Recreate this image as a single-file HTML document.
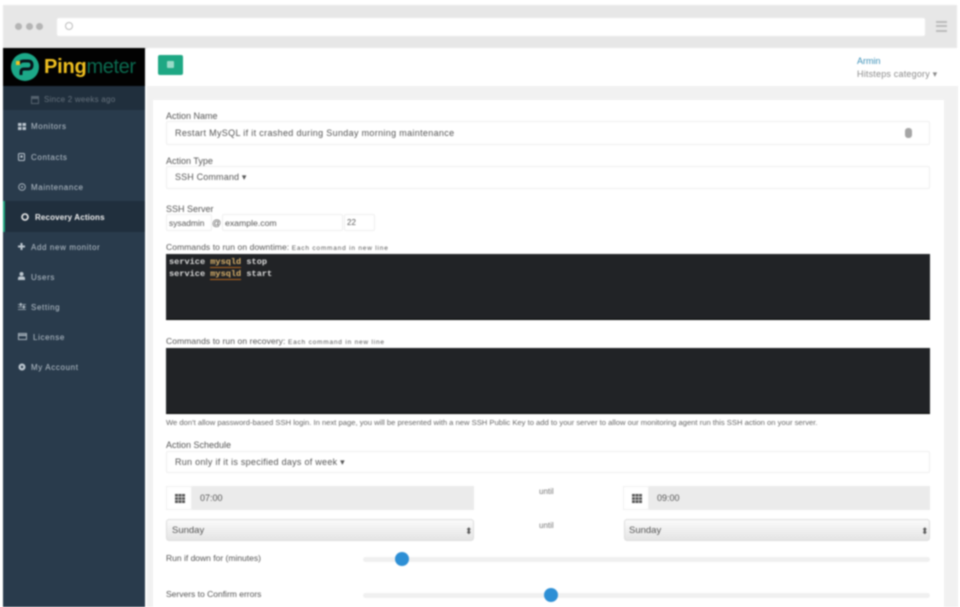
<!DOCTYPE html>
<html lang="en">
<head>
<meta charset="utf-8">
<title>Pingmeter Recovery Actions</title>
<style>
html,body{margin:0;padding:0;background:#fff}
body{width:960px;height:607px;overflow:hidden;position:relative;font-family:"Liberation Sans",sans-serif}
#p{position:absolute;left:0;top:0;width:960px;height:607px;overflow:hidden;filter:blur(.75px);background:#fff}
#p div{position:absolute;box-sizing:border-box}
#p svg{position:absolute}
.t{white-space:nowrap;font-size:9px;line-height:12px;color:#555}
.nav{white-space:nowrap;font-size:8px;line-height:12px;color:#bcc6cf;left:31px;letter-spacing:.62px}
.inp{background:#fff;border:1px solid #eee;border-radius:2px}
.code{background:#212326;border-bottom:1px solid #000;left:166px;width:764px}
.mono{font-family:"Liberation Mono",monospace;font-size:8.6px;line-height:12px;color:#ddd;white-space:nowrap;font-weight:bold}
.mono b{color:#d9b06a;border-bottom:1px solid #b5651d;font-weight:bold}
.sel{background:linear-gradient(#fafafa,#e4e4e4);border:1px solid #ddd;border-radius:3px;height:22px;top:519px}
.tb{background:#ebebeb;top:486px;height:24px}
.sq{background:#fff;border:1px solid #f0f0f0;top:486px;width:26px;height:24px}
.track{height:5px;background:#f0f0f0;border-radius:3px;left:363px;width:567px}
.knob{width:14px;height:14px;border-radius:50%;background:#2d8fd5}
</style>
</head>
<body>
<div id="p">
  <!-- browser chrome -->
  <div style="left:3px;top:5px;width:954px;height:44px;background:#e7e7e7"></div>
  <div style="left:15px;top:23px;width:7px;height:7px;border-radius:50%;background:#b5b5b5"></div>
  <div style="left:26px;top:23px;width:7px;height:7px;border-radius:50%;background:#b5b5b5"></div>
  <div style="left:36px;top:23px;width:7px;height:7px;border-radius:50%;background:#b5b5b5"></div>
  <div style="left:57px;top:18px;width:868px;height:18px;background:#fff;border-radius:2px"></div>
  <div style="left:65px;top:22px;width:8px;height:8px;border:1px solid #bbb;border-radius:50%"></div>
  <div style="left:936px;top:21px;width:11px;height:2px;background:#bbb"></div>
  <div style="left:936px;top:25px;width:11px;height:2px;background:#bbb"></div>
  <div style="left:936px;top:30px;width:11px;height:2px;background:#bbb"></div>

  <!-- sidebar -->
  <div style="left:3px;top:48px;width:142px;height:559px;background:#293b4c"></div>
  <div style="left:3px;top:48px;width:142px;height:38px;background:#020202"></div>
  <div style="left:3px;top:86px;width:142px;height:24px;background:#202f3d"></div>
  <div style="left:3px;top:201px;width:142px;height:31px;background:#202f3d"></div>
  <div style="left:3px;top:201px;width:2px;height:31px;background:#1fa67f"></div>
  <svg style="left:11px;top:53px" width="28" height="28" viewBox="0 0 28 28">
    <circle cx="14" cy="14" r="14" fill="#1ca888"/>
    <path d="M8 11 Q9 8 13 8 H17 Q21 8 21 12 Q21 16 17 16 H13 Q10 16 10 19 V22" fill="none" stroke="#07131a" stroke-width="3"/>
    <rect x="5" y="8" width="4" height="4" fill="#f2c21f"/>
  </svg>
  <div style="left:44px;top:54px;font-size:20px;line-height:26px;font-weight:bold;white-space:nowrap;color:#f0c020;letter-spacing:-.2px">Ping<span style="color:#0b6b50;font-weight:normal;letter-spacing:-.4px">meter</span></div>

  <svg style="left:31px;top:96px" width="8" height="8" viewBox="0 0 8 8"><rect x=".5" y="1.500" width="7" height="6" fill="none" stroke="#56636f"/><rect x="0" y="0" width="8" height="3" fill="#56636f"/></svg>
  <div class="t" style="left:44px;top:94px;font-size:8px;color:#67737e;letter-spacing:.25px">Since 2 weeks ago</div>

  <svg style="left:18px;top:123px" width="8" height="7" viewBox="0 0 8 7"><path d="M0 0h3.500v3H0zM4.500 0H8v3H4.500zM0 4h3.500v3H0zM4.500 4H8v3H4.500z" fill="#bcc6cf"/></svg>
  <div class="nav" style="top:121px">Monitors</div>
  <svg style="left:18px;top:153px" width="7" height="8" viewBox="0 0 7 8"><rect x=".5" y=".5" width="6" height="7" rx="1" fill="none" stroke="#bcc6cf"/><circle cx="3.500" cy="3.500" r="1.300" fill="#bcc6cf"/></svg>
  <div class="nav" style="top:152px">Contacts</div>
  <svg style="left:18px;top:183px" width="8" height="8" viewBox="0 0 8 8"><circle cx="4" cy="4" r="3.300" fill="none" stroke="#aab5bf"/><circle cx="4" cy="4" r="1" fill="#aab5bf"/></svg>
  <div class="nav" style="top:182px">Maintenance</div>
  <svg style="left:21px;top:213px" width="8" height="8" viewBox="0 0 8 8"><circle cx="4" cy="4" r="3" fill="none" stroke="#eee" stroke-width="1.600"/></svg>
  <div class="nav" style="top:212px;left:35px;color:#f0f0f0;font-weight:bold;letter-spacing:.15px">Recovery Actions</div>
  <svg style="left:18px;top:243px" width="7" height="7" viewBox="0 0 7 7"><path d="M2.500 0h2v2.500H7v2H4.500V7h-2V4.500H0v-2h2.500z" fill="#bcc6cf"/></svg>
  <div class="nav" style="top:242px">Add new monitor</div>
  <svg style="left:18px;top:272px" width="7" height="8" viewBox="0 0 7 8"><circle cx="3.500" cy="2" r="2" fill="#bcc6cf"/><path d="M0 8V6.500Q0 4.500 2 4.500H5Q7 4.500 7 6.500V8z" fill="#bcc6cf"/></svg>
  <div class="nav" style="top:272px">Users</div>
  <svg style="left:18px;top:303px" width="8" height="8" viewBox="0 0 8 8"><path d="M0 1.500h8M0 4h8M0 6.500h8" stroke="#8d99a4"/><rect x="2" y="0" width="1.500" height="3" fill="#bcc6cf"/><rect x="5" y="2.500" width="1.500" height="3" fill="#bcc6cf"/></svg>
  <div class="nav" style="top:302px">Setting</div>
  <svg style="left:18px;top:333px" width="9" height="7" viewBox="0 0 9 7"><rect x=".5" y=".5" width="8" height="6" fill="none" stroke="#a8b3bd"/><rect x="0" y="1.500" width="9" height="1.500" fill="#a8b3bd"/></svg>
  <div class="nav" style="top:332px;left:33px">License</div>
  <svg style="left:18px;top:363px" width="8" height="8" viewBox="0 0 8 8"><circle cx="4" cy="4" r="3.500" fill="#bcc6cf"/><circle cx="4" cy="4" r="1.200" fill="#293b4c"/></svg>
  <div class="nav" style="top:362px">My Account</div>

  <!-- top bar -->
  <div style="left:147px;top:48px;width:811px;height:38px;background:#fff"></div>
  <div style="left:158px;top:55px;width:25px;height:20px;background:#1ea884;border-radius:2px"></div>
  <div style="left:167px;top:61px;width:7px;height:7px;background:#9adbc8;border-radius:1px"></div>
  <div class="t" style="left:857px;top:55px;font-size:9px;color:#3a8fb7">Armin</div>
  <div class="t" style="left:857px;top:68px;color:#8a8a8a;letter-spacing:.2px">Hitsteps category ▾</div>

  <!-- content -->
  <div style="left:147px;top:86px;width:811px;height:521px;background:#f1f1f1"></div>
  <div style="left:153px;top:100px;width:791px;height:507px;background:#fff"></div>

  <div class="t" style="left:166px;top:110px">Action Name</div>
  <div class="inp" style="left:166px;top:121px;width:764px;height:24px"></div>
  <div class="t" style="left:175px;top:127px;letter-spacing:.33px">Restart MySQL if it crashed during Sunday morning maintenance</div>
  <div style="left:905px;top:128px;width:7px;height:10px;background:#a5a5a5;border-radius:3px"></div>

  <div class="t" style="left:166px;top:155px">Action Type</div>
  <div class="inp" style="left:166px;top:166px;width:764px;height:23px"></div>
  <div class="t" style="left:175px;top:171px;letter-spacing:.15px">SSH Command ▾</div>

  <div class="t" style="left:166px;top:203px">SSH Server</div>
  <div class="inp" style="left:166px;top:214px;width:46px;height:17px"></div>
  <div class="t" style="left:169px;top:217px;font-size:8.400px">sysadmin</div>
  <div class="t" style="left:212px;top:217px">@</div>
  <div class="inp" style="left:222px;top:214px;width:121px;height:17px"></div>
  <div class="t" style="left:225px;top:217px;font-size:8.700px">example.com</div>
  <div class="inp" style="left:344px;top:214px;width:31px;height:17px"></div>
  <div class="t" style="left:347px;top:217px;font-size:8px">22</div>

  <div class="t" style="left:166px;top:241px;font-size:8.500px;letter-spacing:.1px">Commands to run on downtime: <span style="font-size:6.500px;letter-spacing:.8px">Each command in new line</span></div>
  <div class="code" style="top:254px;height:66px"></div>
  <div class="mono" style="left:169px;top:256px">service <b>mysqld</b> stop</div>
  <div class="mono" style="left:169px;top:268px">service <b>mysqld</b> start</div>

  <div class="t" style="left:166px;top:335px;font-size:8.500px;letter-spacing:.1px">Commands to run on recovery: <span style="font-size:6.500px;letter-spacing:.8px">Each command in new line</span></div>
  <div class="code" style="top:348px;height:66px"></div>

  <div class="t" style="left:166px;top:417px;font-size:7.630px;color:#666">We don't allow password-based SSH login. In next page, you will be presented with a new SSH Public Key to add to your server to allow our monitoring agent run this SSH action on your server.</div>

  <div class="t" style="left:166px;top:439px">Action Schedule</div>
  <div class="inp" style="left:166px;top:451px;width:764px;height:22px"></div>
  <div class="t" style="left:175px;top:456px;letter-spacing:.27px">Run only if it is specified days of week ▾</div>

  <div class="sq" style="left:166px"><svg style="left:8px;top:7px" width="10" height="9" viewBox="0 0 10 9"><path d="M0 0h3v2.500H0zM3.500 0h3v2.500h-3zM7 0h3v2.500H7zM0 3.200h3v2.500H0zM3.500 3.200h3v2.500h-3zM7 3.200h3v2.500H7zM0 6.400h3V9H0zM3.500 6.400h3V9h-3zM7 6.400h3V9H7z" fill="#555"/></svg></div>
  <div class="tb" style="left:192px;width:282px"></div>
  <div class="t" style="left:200px;top:492px">07:00</div>
  <div class="t" style="left:539px;top:486px;font-size:8px;color:#777">until</div>
  <div class="sq" style="left:623px"><svg style="left:8px;top:7px" width="10" height="9" viewBox="0 0 10 9"><path d="M0 0h3v2.500H0zM3.500 0h3v2.500h-3zM7 0h3v2.500H7zM0 3.200h3v2.500H0zM3.500 3.200h3v2.500h-3zM7 3.200h3v2.500H7zM0 6.400h3V9H0zM3.500 6.400h3V9h-3zM7 6.400h3V9H7z" fill="#555"/></svg></div>
  <div class="tb" style="left:649px;width:281px"></div>
  <div class="t" style="left:657px;top:492px">09:00</div>

  <div class="sel" style="left:166px;width:308px"></div>
  <div class="t" style="left:172px;top:525px;font-size:9.500px">Sunday</div>
  <div class="t" style="left:465px;top:525px;font-size:9px">⬍</div>
  <div class="t" style="left:539px;top:520px;font-size:8px;color:#777">until</div>
  <div class="sel" style="left:624px;width:306px"></div>
  <div class="t" style="left:629px;top:525px;font-size:9.500px">Sunday</div>
  <div class="t" style="left:921px;top:525px;font-size:9px">⬍</div>

  <div class="t" style="left:166px;top:552px;font-size:8.500px">Run if down for (minutes)</div>
  <div class="track" style="top:557px"></div>
  <div class="knob" style="left:395px;top:552px"></div>

  <div class="t" style="left:166px;top:588px;font-size:8.500px">Servers to Confirm errors</div>
  <div class="track" style="top:593px"></div>
  <div class="knob" style="left:544px;top:588px"></div>
</div>
</body>
</html>
